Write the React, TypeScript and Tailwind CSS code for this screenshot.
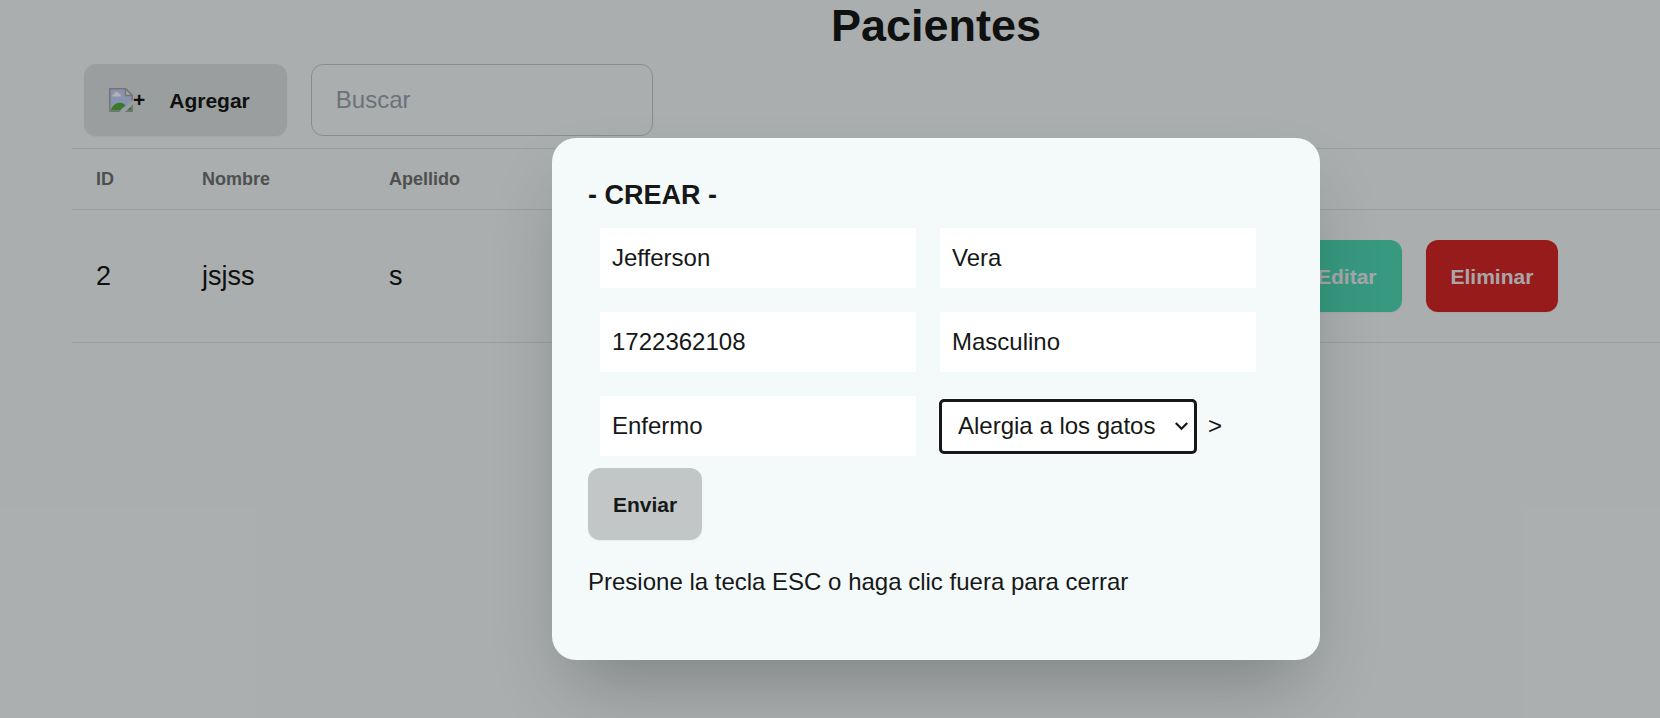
import React from "react";

const patients = [{ id: 2, nombre: "jsjss", apellido: "s" }];

const buttonBase = "h-[72px] rounded-xl border border-transparent pt-0.5 text-[21px] font-bold shadow-xs";
const fieldBase = "h-[60px] w-full min-w-0 bg-white px-3 text-2xl outline-none";

function MissingImage() {
  return (
    <svg width="24" height="24" viewBox="0 0 16 16" aria-hidden="true">
      <path d="M0.5 0.5H11L15.5 5V15.5H0.5Z" fill="#c3d5f8" />
      <path d="M2 5.6C2 4.6 2.8 4.2 3.4 4.1C3.8 2.3 6 2.3 6.4 3.9C7.6 3.9 8 4.8 8 5.6Z" fill="#fff" />
      <path d="M1 15C2.2 11.8 4.5 9.8 7.2 9.8C9 9.8 10.2 10.6 11 11.6L7 15Z" fill="#55ad3c" />
      <path d="M11.5 15L15 12V15Z" fill="#55ad3c" />
      <path d="M0.5 15.5V0.5H11L15.5 5V15.5Z" fill="none" stroke="#a6a6a6" />
      <path d="M11 0.5V5H15.5Z" fill="#f3f3f3" stroke="#a6a6a6" />
      <path d="M7 16L16 8V11L10.6 16Z" fill="#dde2e2" />
    </svg>
  );
}

function Toolbar() {
  return (
    <div className="flex gap-6 px-3">
      <button type="button" className={`${buttonBase} flex items-center gap-6 bg-[#dde2e2] pl-6 pr-9`}>
        <span className="flex items-center pb-0.5">
          <MissingImage />
          <span className="leading-6">+</span>
        </span>
        Agregar
      </button>
      <input
        type="search"
        aria-label="Buscar"
        placeholder="Buscar"
        className="h-[72px] w-[342px] rounded-xl border border-[#c6cbcb] bg-transparent px-6 text-2xl placeholder:text-[#9ca3af]"
      />
    </div>
  );
}

function PatientTable() {
  return (
    <table className="mt-3 w-full table-fixed border-collapse text-left">
      <colgroup>
        <col className="w-[106px]" />
        <col className="w-[187px]" />
        <col />
        <col className="w-[532px]" />
      </colgroup>
      <thead className="border-y border-[#dce1e1] text-lg text-[#707373]">
        <tr className="h-[61px]">
          <th className="px-6">ID</th>
          <th className="px-6">Nombre</th>
          <th className="px-6">Apellido</th>
          <td />
        </tr>
      </thead>
      <tbody className="text-[27px]">
        {patients.map((p) => (
          <tr key={p.id} className="h-[133px] border-b border-[#dce1e1]">
            <td className="px-6">{p.id}</td>
            <td className="px-6">{p.nombre}</td>
            <td className="px-6">{p.apellido}</td>
            <td className="px-6">
              <div className="flex gap-6">
                <button type="button" className={`${buttonBase} bg-[#50dcb7] px-6 text-[#f0f0f5]`}>
                  Editar
                </button>
                <button type="button" className={`${buttonBase} bg-[#da2727] px-6 text-[#f0f0f5]`}>
                  Eliminar
                </button>
              </div>
            </td>
          </tr>
        ))}
      </tbody>
    </table>
  );
}

function AllergySelect() {
  return (
    <div className="relative">
      <select
        aria-label="Alergia"
        className="block h-[53px] w-[256px] appearance-none rounded-sm bg-white px-[18px] text-2xl shadow-[0_0_0_2px_#ffffff] outline-3 -outline-offset-2 outline-[#161818]"
      >
        <option>Alergia a los gatos</option>
      </select>
      <svg
        className="pointer-events-none absolute right-2 top-[22px]"
        width="13"
        height="9"
        viewBox="0 0 13 9"
        fill="none"
        stroke="#161818"
        strokeWidth="2.2"
        aria-hidden="true"
      >
        <path d="M0.8 1L6.5 6.8L12.2 1" />
      </svg>
    </div>
  );
}

function CreateDialog() {
  return (
    <div className="absolute inset-y-0 left-0 -right-[212px] flex items-start justify-center bg-black/30 pt-[138px]">
      <div
        role="dialog"
        aria-label="Crear"
        className="w-[768px] rounded-3xl bg-[#f4fafa] p-9 text-[#161818] shadow-[0_38px_75px_-18px_rgba(0,0,0,0.25)]"
      >
        <h2 className="text-[27px] font-bold leading-[42px]">- CREAR -</h2>
        <form>
          <div className="grid grid-cols-[316px_316px] gap-6 px-3 pt-3">
            <input aria-label="Nombre" defaultValue="Jefferson" className={fieldBase} />
            <input aria-label="Apellido" defaultValue="Vera" className={fieldBase} />
            <input aria-label="Cédula" defaultValue="1722362108" className={fieldBase} />
            <input aria-label="Género" defaultValue="Masculino" className={fieldBase} />
            <input aria-label="Estado" defaultValue="Enfermo" className={fieldBase} />
            <div className="flex items-center gap-3 text-2xl">
              <AllergySelect />
              &gt;
            </div>
          </div>
          <button type="submit" className={`${buttonBase} mt-3 bg-[#c2c6c6] px-6`}>
            Enviar
          </button>
        </form>
        <p className="py-6 text-2xl leading-9">Presione la tecla ESC o haga clic fuera para cerrar</p>
      </div>
    </div>
  );
}

export default function App() {
  return (
    <div className="relative min-h-screen overflow-hidden bg-[#f4fafa] font-['Liberation_Sans',Arial,sans-serif] text-[#161818]">
      <main className="-mr-[212px] px-[72px]">
        <h1 className="pb-3 text-center text-[45px] font-bold leading-[52px]">Pacientes</h1>
        <Toolbar />
        <PatientTable />
      </main>
      <CreateDialog />
    </div>
  );
}
